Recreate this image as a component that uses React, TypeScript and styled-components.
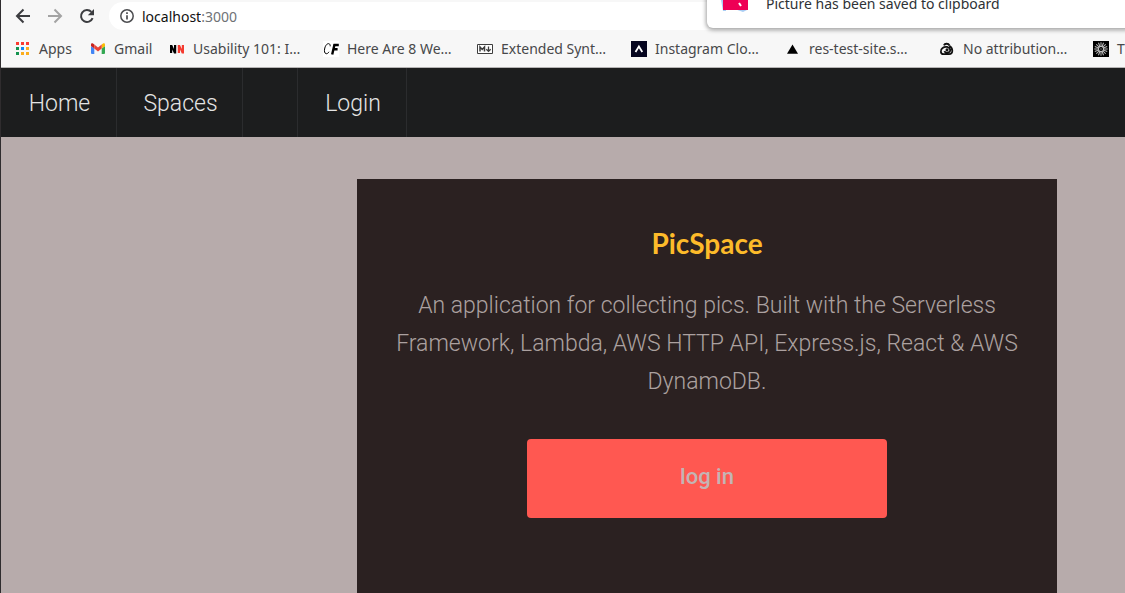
import React from "react";
import styled, { createGlobalStyle } from "styled-components";

const uiFont = `"Noto Sans", "Open Sans", sans-serif`;
const pageFont = `Roboto, "Noto Sans", sans-serif`;

const GlobalStyle = createGlobalStyle`
  *, *::before, *::after { box-sizing: border-box; }
  html { height: 100%; overflow: hidden; }
  body { margin: 0; min-height: 100%; background: #b7abab; }
  svg { display: block; flex: none; }
`;

const Window = styled.div`
  position: relative;
  display: flex;
  flex-direction: column;
  min-height: 100vh;
  overflow: hidden;
  border-left: 1px solid #2f2c2e;
`;

const Chrome = styled.header`
  background: #f7f7f7;
  border-bottom: 1px solid #b6b4b4;
  font-family: ${uiFont};
  font-size: 14px;
`;

const Toolbar = styled.div`
  display: flex;
  align-items: center;
  height: 30px;
  padding: 2px 0 0 12px;
`;

const ToolButton = styled.button<{ $muted?: boolean }>`
  display: grid;
  place-items: center;
  flex: none;
  width: 20px;
  height: 28px;
  margin-right: 12px;
  padding: 0;
  border: 0;
  background: none;
  color: ${(p) => (p.$muted ? "#a3a3a3" : "#3c3d40")};
`;

const AddressBar = styled.label`
  display: flex;
  align-items: center;
  flex: 1;
  height: 28px;
  padding-left: 11px;
  border-radius: 14px 0 0 14px;
  background: #fff;
  color: #4c4d50;
`;

const AddressInput = styled.input`
  field-sizing: content;
  margin-left: 8px;
  padding: 0;
  border: 0;
  outline: 0;
  background: none;
  color: #111;
  font: inherit;
`;

const Port = styled.span`
  color: #6f7276;
`;

const BookmarkBar = styled.nav`
  display: flex;
  align-items: center;
  height: 37px;
  padding-left: 14px;
  overflow: hidden;
`;

const Bookmark = styled.a<{ $width: number }>`
  display: flex;
  align-items: center;
  gap: 8px;
  flex: 0 0 ${(p) => p.$width}px;
  color: #47484a;
  line-height: 20px;
  white-space: nowrap;
  text-decoration: none;
`;

const Notification = styled.aside`
  position: absolute;
  top: -24px;
  right: -8px;
  left: 706px;
  display: flex;
  align-items: flex-end;
  gap: 16px;
  height: 52px;
  padding: 0 14px 14px;
  border-radius: 6px;
  background: #fff;
  box-shadow: 0 1px 4px 1px rgba(0, 0, 0, 0.38);
  color: #2e3236;
  font: 14px/20px ${uiFont};
`;

const SiteNav = styled.nav`
  display: flex;
  height: 69px;
  background: #1c1d1e;
  font-family: ${pageFont};
`;

const NavLink = styled.a<{ $width: number }>`
  display: grid;
  place-items: center;
  flex: 0 0 ${(p) => p.$width}px;
  padding: 2px 0 0 2px;
  border-right: 1px solid #2b2c2e;
  color: #e4e4e4;
  font-size: 23px;
  font-weight: 300;
  text-decoration: none;
`;

const Main = styled.main`
  display: flex;
  flex: 1;
  justify-content: flex-end;
  padding: 42px 68px 0 0;
  background: #b7abab;
`;

const Card = styled.section`
  display: flex;
  flex-direction: column;
  align-items: center;
  width: 700px;
  padding: 44px 32px;
  background: #2b2121;
  text-align: center;
`;

const Title = styled.h1`
  margin: 0;
  color: #fdbb2a;
  font: 700 28px/40px Lato, sans-serif;
`;

const Intro = styled.p`
  margin: 24px 0 38px;
  color: #aca1a0;
  font: 300 23px/38px ${pageFont};
`;

const LoginButton = styled.button`
  width: 360px;
  height: 79px;
  padding: 0 0 4px;
  border: 0;
  border-radius: 4px;
  background: #ff5851;
  color: #c4b4b4;
  font: 500 22px/32px ${pageFont};
`;

const BackIcon = () => (
  <svg width="16" height="16" viewBox="0 0 16 16" fill="none" stroke="currentColor" strokeWidth="2">
    <path d="M15 8H2.500M8.500 1.500L2 8l6.500 6.500" />
  </svg>
);

const ForwardIcon = () => (
  <svg width="16" height="16" viewBox="0 0 16 16" fill="none" stroke="currentColor" strokeWidth="2">
    <path d="M1 8h12.500M7.500 1.500L14 8l-6.500 6.500" />
  </svg>
);

const ReloadIcon = () => (
  <svg width="16" height="16" viewBox="0 0 16 16" fill="none" stroke="currentColor" strokeWidth="2">
    <path d="M13.600 10.200A6 6 0 1 1 12.400 3.900" />
    <path d="M15 1v6.200H8.800z" fill="currentColor" stroke="none" />
  </svg>
);

const InfoIcon = () => (
  <svg width="14" height="14" viewBox="0 0 14 14" fill="none" stroke="currentColor">
    <circle cx="7" cy="7" r="6.200" strokeWidth="1.500" />
    <path d="M7 6.200v4.300M7 3.300v1.700" strokeWidth="1.700" />
  </svg>
);

const appColors = ["#fb3b30", "#fb3b30", "#fb3b30", "#14934f", "#1287f5", "#fbad1d", "#14934f", "#fbad1d", "#fbad1d"];

const AppsIcon = () => (
  <svg width="16" height="16" viewBox="0 0 16 16">
    {appColors.map((color, i) => (
      <rect key={i} x={1 + (i % 3) * 5} y={1 + Math.floor(i / 3) * 5} width="3" height="3" fill={color} />
    ))}
  </svg>
);

const GmailIcon = () => (
  <svg width="16" height="16" viewBox="0 0 16 16">
    <path d="M1 5l3.300 2.500V13H2a1 1 0 0 1-1-1z" fill="#4285f4" />
    <path d="M15 5l-3.300 2.500V13H14a1 1 0 0 0 1-1z" fill="#34a853" />
    <path d="M11.700 3.600L13 2.600c.9-.6 2 0 2 1.100V5l-3.300 2.600z" fill="#fbbc04" />
    <path d="M1 5V3.700c0-1.100 1.100-1.700 2-1.100l1.300 1v4z" fill="#c5221f" />
    <path d="M4.300 3.600L8 6.400l3.700-2.800v4L8 10.400 4.300 7.600z" fill="#ea4335" />
  </svg>
);

const NnIcon = () => (
  <svg width="16" height="16" viewBox="0 0 16 16">
    <path d="M1 4h2.200l1.800 4V4h2.200v8.500H5L3.200 8.500v3.500H1z" fill="#000" />
    <path d="M8.800 4H11l1.800 4V4H15v8.500h-2.200L11 8.500v3.500H8.800z" fill="#f43b30" />
  </svg>
);

const CfIcon = () => (
  <svg width="16" height="16" viewBox="0 0 16 16" fill="none" stroke="#000">
    <path d="M0 0h16v16H0z" fill="#fff" stroke="none" />
    <path d="M7.200 5.300C7.500 1.500 3.300 1.500 1.800 7c-1.600 6 2.200 7.300 4.200 3.800" strokeWidth="1" />
    <path d="M9.200 13.500l2.300-10M10.500 4H15.800M9.800 8.200h4.800" strokeWidth="2.400" />
  </svg>
);

const MarkdownIcon = () => (
  <svg width="16" height="16" viewBox="0 0 16 16" fill="none" stroke="#3d3d3d">
    <path d="M.5 3.500h15v9H.5z" fill="#fff" />
    <path d="M3 10.500V6l2.200 2.500L7.500 6v4.500" strokeWidth="1.500" />
    <path d="M11.500 5.500v4.700M9.300 8.200l2.200 2.200 2.200-2.200" strokeWidth="1.300" />
  </svg>
);

const CaretIcon = () => (
  <svg width="16" height="16" viewBox="0 0 16 16">
    <path d="M0 0h16v16H0z" fill="#05051f" />
    <path d="M4.500 11L7.900 5.500 11.300 11" fill="none" stroke="#fff" strokeWidth="1.800" />
  </svg>
);

const TriangleIcon = () => (
  <svg width="16" height="16" viewBox="0 0 16 16">
    <path d="M7.500 3.500L13 12.800H2z" fill="#000" />
  </svg>
);

const EyeIcon = () => (
  <svg width="16" height="16" viewBox="0 0 16 16" fill="none" stroke="#111">
    <path d="M5 4.300C5.800 2.200 9.200 2 10.600 4.600" strokeWidth="2" />
    <path d="M10.300 5c3.500 1.500 4.600 8.200-.3 8.200H4.800C1.200 13.200 1 8.800 3.600 7c2.600-1.900 6.900-1.400 7.600 1.700.6 3-4.800 3.800-5.800 1.400" strokeWidth="1.800" />
    <circle cx="8" cy="8.800" r="1.500" fill="#111" stroke="none" />
  </svg>
);

const rays = Array.from({ length: 16 }, (_, i) => i * 22.5);

const BurstIcon = () => (
  <svg width="16" height="16" viewBox="0 0 16 16" fill="none">
    <path d="M0 0h16v16H0z" fill="#000" />
    {rays.map((angle) => (
      <path key={angle} d="M8 1.300v4.500" stroke="#bdbdbd" strokeWidth="1" transform={`rotate(${angle} 8 8)`} />
    ))}
    <circle cx="8" cy="8" r="2.700" stroke="#d0d0d0" strokeWidth=".8" />
    <circle cx="8" cy="8" r="1.600" fill="#333" />
  </svg>
);

const PictureIcon = () => (
  <svg width="29" height="24" viewBox="0 0 29 24">
    <path d="M0 10l5 0v11H2zM8 17l17-2 1 5-4 2z" fill="#a9cdf3" />
    <path d="M2 0h25v20H2z" fill="#ee0055" />
    <path d="M18 13l2 3" stroke="#fff" strokeWidth="2" />
  </svg>
);

const bookmarks = [
  { title: "Apps", icon: <AppsIcon />, width: 75 },
  { title: "Gmail", icon: <GmailIcon />, width: 79 },
  { title: "Usability 101: I…", icon: <NnIcon />, width: 154 },
  { title: "Here Are 8 We…", icon: <CfIcon />, width: 154 },
  { title: "Extended Synt…", icon: <MarkdownIcon />, width: 154 },
  { title: "Instagram Clo…", icon: <CaretIcon />, width: 154 },
  { title: "res-test-site.s…", icon: <TriangleIcon />, width: 154 },
  { title: "No attribution…", icon: <EyeIcon />, width: 154 },
  { title: "T", icon: <BurstIcon />, width: 154 },
];

const navItems = [
  { title: "Home", width: 116 },
  { title: "Spaces", width: 126 },
  { title: "", width: 55 },
  { title: "Login", width: 109 },
];

export default function App() {
  return (
    <>
      <GlobalStyle />
      <Window>
        <Chrome>
          <Toolbar>
            <ToolButton aria-label="Back"><BackIcon /></ToolButton>
            <ToolButton aria-label="Forward" $muted><ForwardIcon /></ToolButton>
            <ToolButton aria-label="Reload"><ReloadIcon /></ToolButton>
            <AddressBar>
              <InfoIcon />
              <AddressInput aria-label="Address" defaultValue="localhost" />
              <Port>:3000</Port>
            </AddressBar>
          </Toolbar>
          <BookmarkBar aria-label="Bookmarks">
            {bookmarks.map((b) => (
              <Bookmark key={b.title} href="#" $width={b.width}>
                {b.icon}
                <span>{b.title}</span>
              </Bookmark>
            ))}
          </BookmarkBar>
        </Chrome>
        <SiteNav aria-label="Site">
          {navItems.map((item) => (
            <NavLink key={item.width} href="#" $width={item.width}>{item.title}</NavLink>
          ))}
        </SiteNav>
        <Main>
          <Card>
            <Title>PicSpace</Title>
            <Intro>
              An application for collecting pics. Built with the Serverless
              Framework, Lambda, AWS HTTP API, Express.js, React &amp; AWS
              DynamoDB.
            </Intro>
            <LoginButton>log in</LoginButton>
          </Card>
        </Main>
        <Notification role="status">
          <PictureIcon />
          <span>Picture has been saved to clipboard</span>
        </Notification>
      </Window>
    </>
  );
}
